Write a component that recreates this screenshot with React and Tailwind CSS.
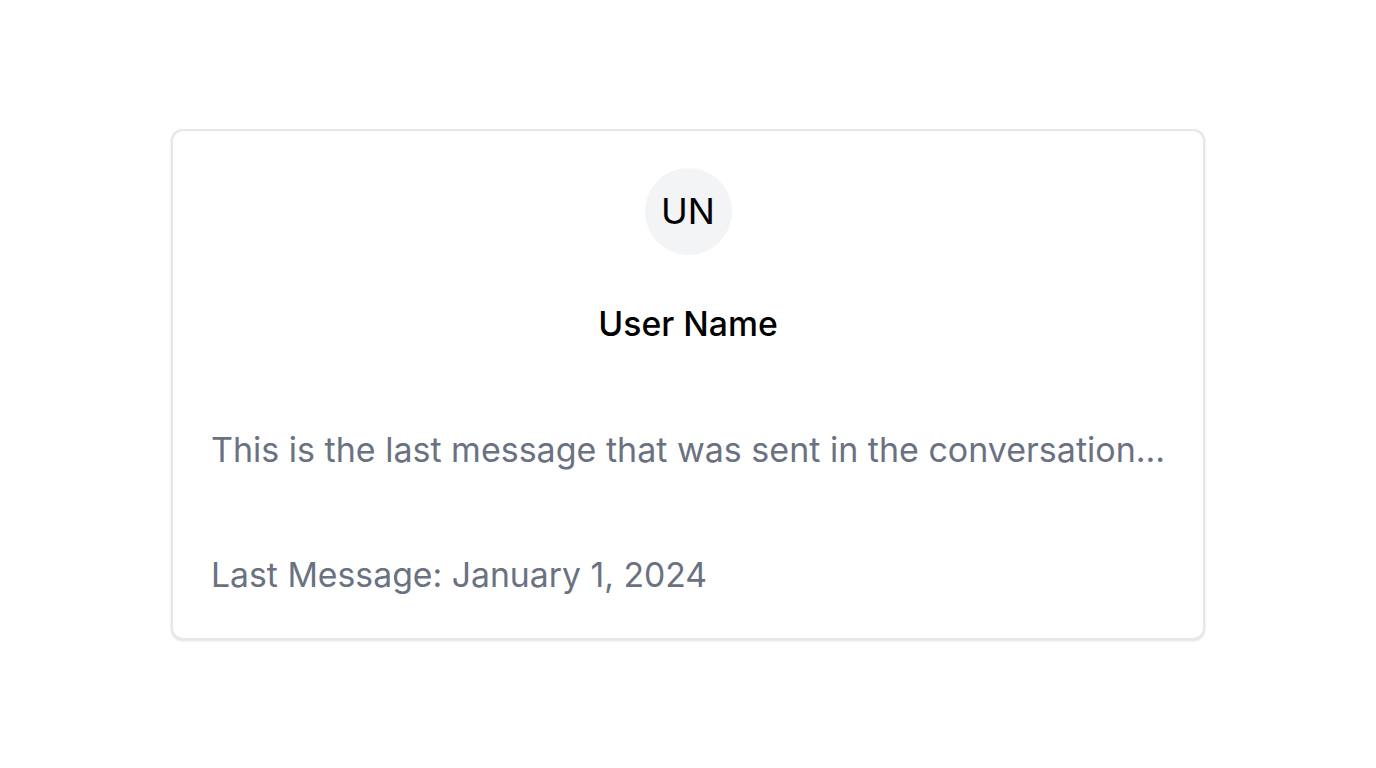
import React from 'react';

function App() {
  return (
    <div className="min-h-screen bg-white flex items-center justify-center font-['Inter',sans-serif]">
      <div className="w-[1034px] bg-white border-2 border-gray-200 rounded-xl shadow-sm px-[38px] pt-[37px] pb-[43px]">
        {/* Header */}
        <div className="flex flex-col items-center">
          <div className="w-[87px] h-[87px] rounded-full bg-gray-100 flex items-center justify-center text-[36px] text-black">
            UN
          </div>
          <h2 className="mt-[49px] text-[33.75px] leading-[40px] font-medium text-black">User Name</h2>
        </div>

        {/* Body */}
        <p className="mt-[86px] text-[34px] leading-[40px] text-gray-500 whitespace-nowrap">
          This is the last message that was sent in the conversation...
        </p>

        {/* Footer */}
        <p className="mt-[85px] text-[33.75px] leading-[40px] text-gray-500">
          Last Message: January 1, 2024
        </p>
      </div>
    </div>
  );
}

export default App;
